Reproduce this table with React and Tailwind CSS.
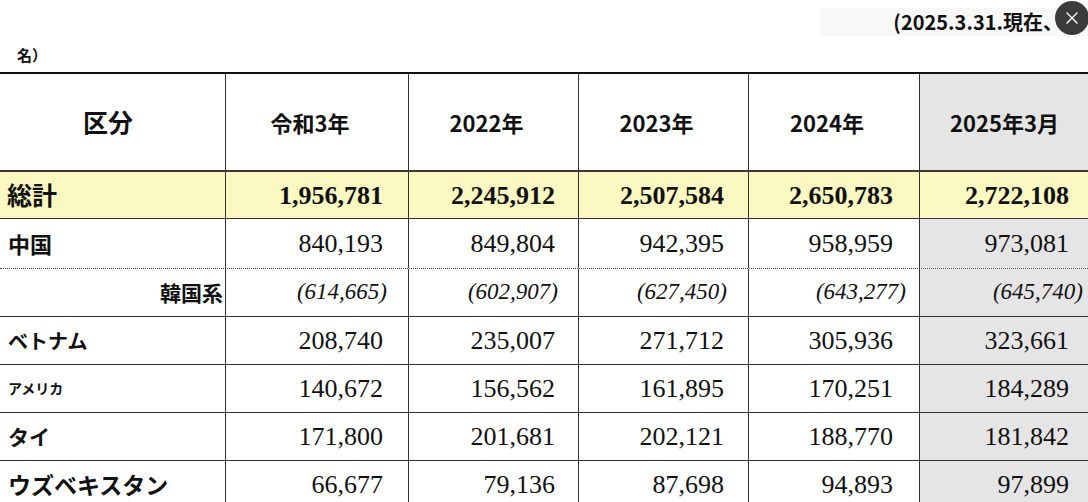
import React from "react";

const JP = { fontFamily: '"Noto Sans CJK JP", "Noto Sans", sans-serif' };
const SERIF = { fontFamily: '"Liberation Serif", "Noto Serif", serif' };

const cols = "grid grid-cols-[226px_183px_170px_170px_171px_180px]";

const rows = [
  { label: "中国", size: "text-[22px]", vals: ["840,193", "849,804", "942,395", "958,959", "973,081"], border: "border-b border-dotted border-[#444]", h: "h-[50px]" },
  { label: "韓国系", size: "text-[21px]", right: true, italic: true, vals: ["(614,665)", "(602,907)", "(627,450)", "(643,277)", "(645,740)"], border: "border-b border-[#333]", h: "h-[48px]" },
  { label: "ベトナム", size: "text-[20px]", vals: ["208,740", "235,007", "271,712", "305,936", "323,661"], border: "border-b border-[#333]", h: "h-[48px]" },
  { label: "アメリカ", size: "text-[14px]", vals: ["140,672", "156,562", "161,895", "170,251", "184,289"], border: "border-b border-[#333]", h: "h-[48px]" },
  { label: "タイ", size: "text-[21px]", vals: ["171,800", "201,681", "202,121", "188,770", "181,842"], border: "border-b border-[#333]", h: "h-[48px]" },
  { label: "ウズベキスタン", size: "text-[23px]", vals: ["66,677", "79,136", "87,698", "94,893", "97,899"], border: "border-b border-[#333]", h: "h-[48px]" },
];

const pads = ["pr-[25px]", "pr-[23px]", "pr-[24px]", "pr-[26px]", "pr-[31px]"];
const italicPads = ["pr-[21px]", "pr-[20px]", "pr-[21px]", "pr-[13px]", "pr-[17px]"];

function NumCell({ v, i, bold, italic, yellow }) {
  const bg = yellow ? "bg-[#fbf8c2]" : i === 4 ? "bg-[#e5e5e5]" : "";
  const br = i < 4 ? "border-r border-[#333]" : "";
  const style = bold
    ? `font-bold text-[26px] ${pads[i]}`
    : italic
    ? `italic text-[23px] ${italicPads[i]}`
    : `text-[26px] ${pads[i]}`;
  return (
    <div className={`flex items-center justify-end ${bg} ${br} text-[#111] ${style}`} style={SERIF}>
      {v}
    </div>
  );
}

export default function App() {
  return (
    <div className="relative w-[1088px] h-[502px] overflow-hidden bg-white text-[#111]" style={JP}>
      {/* top caption */}
      <div className="h-[44px] flex items-center justify-end">
        <div className="h-[28px] w-[268px] pr-[25px] flex items-center justify-end bg-[#f8f8f8]">
          <span className="text-[20px] font-bold whitespace-nowrap">(2025.3.31.現在、</span>
        </div>
      </div>
      <div className="h-[22px] leading-[22px] pl-[17px] text-[15px] font-bold">名）</div>
      <div className="h-[6px]" />

      {/* table */}
      <div className="border-t-2 border-[#111]">
        {/* header */}
        <div className={`${cols} h-[98px] border-b-2 border-[#3a3a2a]`}>
          <div className="flex items-center justify-center pr-[9px] border-r border-[#333] text-[25px] font-bold">区分</div>
          {["令和3年", "2022年", "2023年", "2024年"].map((t) => (
            <div key={t} className="flex items-center justify-center pr-[14px] border-r border-[#333] text-[22px] font-bold">
              {t}
            </div>
          ))}
          <div className="flex items-center justify-center pr-[11px] bg-[#e5e5e5] text-[22px] font-bold">2025年3月</div>
        </div>

        {/* total */}
        <div className={`${cols} h-[47px] border-b border-[#333] bg-[#fbf8c2]`}>
          <div className="flex items-center pl-[7px] border-r border-[#333] text-[25px] font-bold">総計</div>
          {["1,956,781", "2,245,912", "2,507,584", "2,650,783", "2,722,108"].map((v, i) => (
            <NumCell key={v} v={v} i={i} bold yellow />
          ))}
        </div>

        {rows.map((r) => (
          <div key={r.label} className={`${cols} ${r.h} ${r.border}`}>
            <div
              className={`flex items-center ${r.right ? "justify-end pr-[2px]" : "pl-[8px]"} border-r border-[#333] ${r.size} font-bold`}
            >
              {r.label}
            </div>
            {r.vals.map((v, i) => (
              <NumCell key={i} v={v} i={i} italic={r.italic} />
            ))}
          </div>
        ))}
      </div>

      {/* close button overlay */}
      <div className="absolute left-[1055px] top-[1px] w-[34px] h-[34px] rounded-full bg-[#3b3b3b] flex items-center justify-center">
        <svg width="14" height="14" viewBox="0 0 14 14" fill="none" stroke="white" strokeWidth="1.4" strokeLinecap="round">
          <path d="M2 2 L12 12 M12 2 L2 12" />
        </svg>
      </div>
    </div>
  );
}
